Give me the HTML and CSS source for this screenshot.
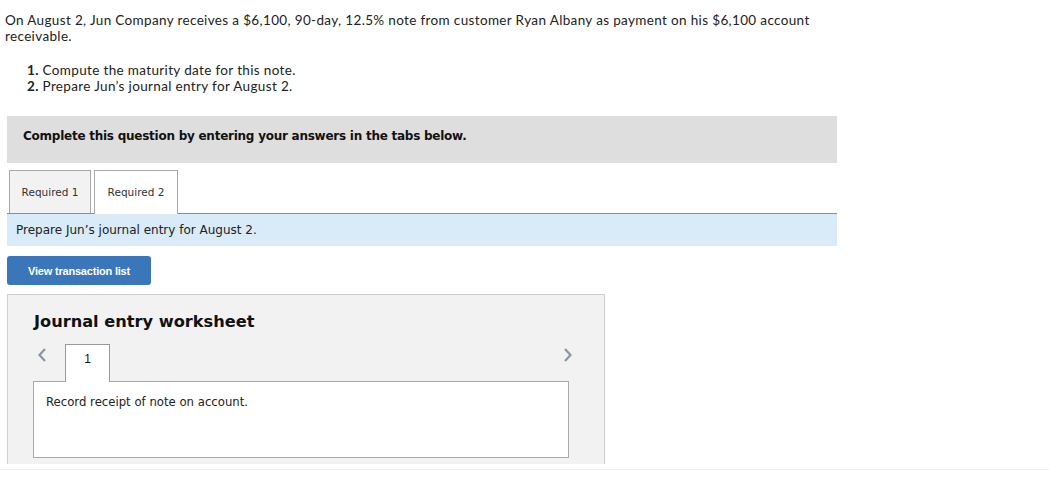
FILE: index.html
```html
<!DOCTYPE html>
<html>
<head>
<meta charset="utf-8">
<link rel="stylesheet" href="styles.css">
</head>
<body>
<div class="page">
  <p class="intro">On August 2, Jun Company receives a $6,100, 90-day, 12.5% note from customer Ryan Albany as payment on his $6,100 account receivable.</p>
  <ol class="steps">
    <li><b>1.</b> Compute the maturity date for this note.</li>
    <li><b>2.</b> Prepare Jun’s journal entry for August 2.</li>
  </ol>
  <div class="complete">Complete this question by entering your answers in the tabs below.</div>
  <div class="tabs">
    <div class="tab">Required 1</div>
    <div class="tab active">Required 2</div>
  </div>
  <div class="banner">Prepare Jun’s journal entry for August 2.</div>
  <button class="btn">View transaction list</button>
  <div class="worksheet">
    <h2 class="ws-title">Journal entry worksheet</h2>
    <div class="ws-nav">
      <span class="chev">
        <svg width="10" height="16" viewBox="0 0 10 16"><path d="M8 2 L2.5 8 L8 14" fill="none" stroke="#8a96a3" stroke-width="2.2"/></svg>
      </span>
      <div class="ws-tab">1</div>
      <span class="spacer"></span>
      <span class="chev right">
        <svg width="10" height="16" viewBox="0 0 10 16"><path d="M2 2 L7.5 8 L2 14" fill="none" stroke="#8a96a3" stroke-width="2.2"/></svg>
      </span>
    </div>
    <div class="ws-box">Record receipt of note on account.</div>
  </div>
  <div class="bottom-rule"></div>
</div>
</body>
</html>
```

FILE: styles.css
```css
html, body {
  margin: 0;
  padding: 0;
  background: #fff;
}
.page {
  width: 1049px;
  height: 477px;
  overflow: hidden;
  font-family: "Lato", "Liberation Sans", sans-serif;
  color: #222;
}
.intro {
  margin: 0;
  padding: 12px 0 0 5px;
  width: 815px;
  font-size: 13.5px;
  letter-spacing: 0.35px;
  line-height: 16px;
}
.steps {
  list-style: none;
  margin: 0;
  padding: 18px 0 0 27px;
  font-size: 13.5px;
  letter-spacing: 0.35px;
  line-height: 16px;
}
.steps b {
  font-weight: 700;
}
.complete {
  box-sizing: border-box;
  margin: 22px 0 0 7px;
  width: 830px;
  height: 47px;
  padding: 0 0 8px 16px;
  background: #dedede;
  font-family: "DejaVu Sans", Verdana, sans-serif;
  font-weight: bold;
  font-size: 12px;
  letter-spacing: -0.25px;
  color: #111;
  display: flex;
  align-items: center;
}
.tabs {
  display: flex;
  gap: 3px;
  margin: 7px 0 0 9px;
  height: 43px;
  align-items: flex-end;
}
.tab {
  box-sizing: border-box;
  height: 43px;
  width: 82px;
  border: 1px solid #a8a8a8;
  border-bottom: none;
  background: #f2f2f2;
  font-family: "DejaVu Sans", Verdana, sans-serif;
  font-size: 10.5px;
  color: #333;
  display: flex;
  align-items: center;
  justify-content: center;
}
.tab.active {
  background: #fff;
  width: 84px;
  position: relative;
  z-index: 1;
  height: 44px;
  margin-bottom: -1px;
  padding-bottom: 1px;
}
.banner {
  box-sizing: border-box;
  margin-left: 7px;
  width: 830px;
  height: 33px;
  border-top: 1px solid #8e8e8e;
  background: #d9ebf9;
  padding-left: 9px;
  font-family: "DejaVu Sans", Verdana, sans-serif;
  font-size: 12px;
  color: #222;
  display: flex;
  align-items: center;
}
.btn {
  display: block;
  margin: 10px 0 0 7px;
  width: 144px;
  height: 29px;
  border: none;
  border-radius: 3px;
  background: #3b76bb;
  color: #fff;
  font-family: "Liberation Sans", Arial, sans-serif;
  font-weight: bold;
  font-size: 11px;
  padding: 0;
  letter-spacing: -0.2px;
}
.worksheet {
  box-sizing: border-box;
  margin: 9px 0 0 7px;
  width: 598px;
  height: 170px;
  background: #f2f2f2;
  border: 1px solid #cfcfcf;
  border-bottom: none;
  padding: 0 31px 0 25px;
}
.ws-title {
  margin: 17px 0 0 1px;
  font-family: "DejaVu Sans", Verdana, sans-serif;
  font-size: 16.2px;
  font-weight: bold;
  color: #111;
  line-height: 20px;
}
.ws-nav {
  display: flex;
  align-items: flex-end;
  margin-top: 12px;
  height: 37px;
}
.chev {
  align-self: flex-start;
  margin-top: 3px;
  display: flex;
  padding-left: 4px;
  width: 32px;
  box-sizing: border-box;
}
.chev.right {
  width: auto;
  padding-left: 0;
}
.spacer {
  flex: 1;
}
.ws-tab {
  box-sizing: border-box;
  width: 45px;
  height: 38px;
  margin-bottom: -1px;
  position: relative;
  z-index: 1;
  background: #fff;
  border: 1px solid #999;
  border-bottom: none;
  font-family: "Liberation Sans", Arial, sans-serif;
  font-size: 12px;
  color: #111;
  text-align: center;
  padding-top: 7px;
}
.ws-box {
  box-sizing: border-box;
  width: 536px;
  height: 77px;
  background: #fff;
  border: 1px solid #aaa;
  padding: 13px 0 0 12px;
  font-family: "DejaVu Sans", Verdana, sans-serif;
  font-size: 11.7px;
  color: #222;
}
.bottom-rule {
  margin-top: 5px;
  height: 1px;
  background: #eeeeee;
}
```
